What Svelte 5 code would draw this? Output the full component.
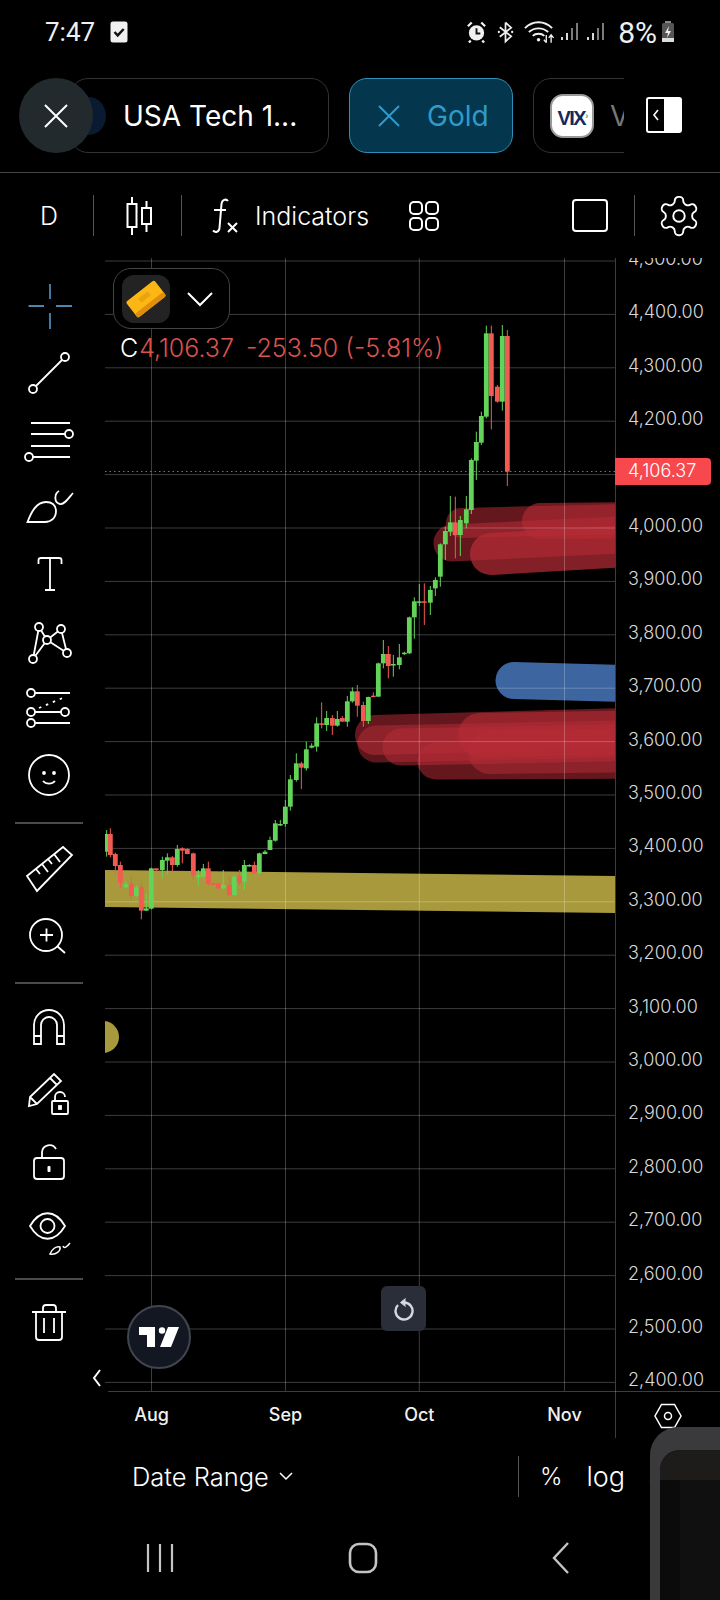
<script>
  const priceY = (p) => 528 + (4000 - p) * 0.534;

  const prices = [];
  for (let p = 4500; p >= 2400; p -= 100) prices.push(p);
  const fmt = (p) => p.toLocaleString('en-US', { minimumFractionDigits: 2 });

  const months = [
    { name: 'Aug', x: 151.5 },
    { name: 'Sep', x: 285.5 },
    { name: 'Oct', x: 419.3 },
    { name: 'Nov', x: 564.5 }
  ];

  // rows are [x, bodyTop, bodyBottom, wickTop, wickBottom, colour], read at 3x
  const sections = [
    { ox: 100, oy: 810, rows: [
      [20,72,125,60,140,'g'],[31,72,135,55,142,'r'],[46,132,168,128,190,'r'],[61,165,218,155,235,'r'],
      [78,222,232,215,235,'g'],[94,222,258,200,272,'r'],[109,232,258,225,262,'g'],[124,232,302,218,328,'r'],
      [139,295,302,250,303,'g'],[154,175,296,173,298,'g'],[169,175,180,175,185,'r'],[187,150,180,140,205,'g'],
      [202,142,152,130,195,'g'],[217,142,165,138,185,'r'],[232,117,165,105,170,'g'],[247,115,122,112,160,'r'],
      [262,117,132,115,133,'r'],[280,130,198,128,210,'r'],[295,195,202,180,225,'g'],[310,175,200,162,205,'g'],
      [325,175,222,155,228,'r'],[340,220,223,218,224,'r'],[355,220,235,220,236,'r'],[370,225,235,180,238,'g'],
      [388,225,255,200,258,'r'],[403,200,255,198,258,'g'],[418,198,218,180,225,'r'],[433,165,215,150,240,'g'],
      [448,165,168,163,170,'g'],[463,165,190,155,192,'r'],[478,130,190,128,192,'g'],[495,125,132,120,133,'g']
    ] },
    { ox: 260, oy: 580, rows: [
      [30,780,810,770,810,'g'],[46,730,782,720,785,'g'],[61,732,736,720,738,'g'],[76,680,732,660,740,'g'],
      [91,598,680,585,692,'g'],[109,550,600,520,605,'g'],[124,550,563,545,627,'r'],[139,508,565,485,572,'g'],
      [155,497,503,490,505,'g'],[170,430,500,412,515,'g'],[185,430,433,367,445,'r'],[200,414,435,393,453,'g'],
      [217,414,437,405,465,'r'],[232,417,437,393,440,'g'],[247,414,425,408,425,'r'],[262,364,425,348,440,'g'],
      [277,334,364,322,368,'g'],[292,334,377,315,410,'r'],[310,375,423,365,440,'r'],[325,351,423,350,432,'g'],
      [340,347,350,337,350,'r'],[355,250,350,248,350,'g'],[370,222,250,180,265,'g'],[385,222,258,198,295,'r'],
      [400,252,256,225,290,'g'],[418,232,255,192,268,'g'],[433,218,222,215,225,'g'],[448,112,220,110,222,'g'],
      [463,64,112,52,176,'g'],[478,64,68,12,78,'g'],[493,64,68,10,135,'r'],[511,30,68,18,105,'g'],[526,0,25,-8,48,'g']
    ] },
    { ox: 400, oy: 310, rows: [
      [121,703,800,700,830,'g'],[136,663,703,650,750,'g'],[151,637,665,558,678,'g'],[166,637,675,560,745,'r'],
      [181,630,675,618,738,'g'],[199,598,640,558,655,'g'],[214,450,600,445,612,'g'],[229,396,452,365,510,'g'],
      [244,318,398,305,405,'g'],[259,70,320,47,325,'g'],[274,70,258,47,358,'r'],[292,230,275,225,278,'r'],
      [307,78,275,45,302,'g'],[322,78,485,60,528,'r']
    ] }
  ];

  const candles = sections.flatMap((s) =>
    s.rows.map(([x, top, bot, wt, wb, c]) => ({
      x: s.ox + x / 3,
      top: s.oy + top / 3,
      h: Math.max((bot - top) / 3, 1.5),
      wt: s.oy + wt / 3,
      wb: s.oy + wb / 3,
      fill: c === 'g' ? '#63d35a' : '#f25a52'
    }))
  );

  // capsule zones: a thick round line running off the right of the plot
  const reds = [
    { x1: 461, y1: 523, y2: 518, w: 30, o: 0.55 },
    { x1: 452, y1: 543, y2: 533, w: 37, o: 0.55 },
    { x1: 491, y1: 554, y2: 544, w: 42, o: 0.72 },
    { x1: 540, y1: 521, y2: 520, w: 36, o: 0.6 },
    { x1: 375, y1: 735, y2: 727, w: 40, o: 0.55 },
    { x1: 376, y1: 744, y2: 738, w: 37, o: 0.5 },
    { x1: 401, y1: 747, y2: 742, w: 37, o: 0.55 },
    { x1: 436, y1: 761, y2: 760, w: 37, o: 0.55 },
    { x1: 480, y1: 735, y2: 732, w: 44, o: 0.6 },
    { x1: 490, y1: 752, y2: 750, w: 44, o: 0.5 }
  ];
</script>

<div class="page">
  <header class="status">
    <span class="time">7:47</span>
    <svg class="check" viewBox="0 0 18 22" width="18" height="22"><rect x="0.5" y="0.5" width="17" height="21" rx="2.5" fill="#f0f0f0"/><path d="M4.5 11l3.2 3.4 6-6.4" fill="none" stroke="#111" stroke-width="2.4"/></svg>
    <span class="grow"></span>
    <svg viewBox="0 0 22 24" width="21" height="24" class="st-ic"><circle cx="11" cy="13" r="8" fill="#f0f0f0"/><path d="M11 8v5.5h4" fill="none" stroke="#111" stroke-width="2"/><path d="M2 6l4-4M20 6l-4-4M5 21l-2 2M17 21l2 2" stroke="#f0f0f0" stroke-width="2.4"/></svg>
    <svg viewBox="0 0 20 24" width="19" height="24" class="st-ic"><path d="M10 2v20l6-5.5L4 7M10 2l6 5.5L4 17" fill="none" stroke="#f0f0f0" stroke-width="1.8"/><circle cx="3" cy="12" r="1.2" fill="#f0f0f0"/><circle cx="17" cy="12" r="1.2" fill="#f0f0f0"/></svg>
    <svg viewBox="0 0 32 24" width="31" height="24" class="st-ic wifi"><path d="M1 8c8-8 20-8 28 0M5 12c6-5 14-5 20 0M9 16c3-3 9-3 12 0" fill="none" stroke="#f0f0f0" stroke-width="2"/><circle cx="15" cy="20" r="1.8" fill="#f0f0f0"/><path d="M23 15v8M20.5 20l2.5 3M28 23v-8M25.5 18l2.5-3 2.5 3" fill="none" stroke="#f0f0f0" stroke-width="1.4"/></svg>
    <svg viewBox="0 0 18 24" width="18" height="24" class="st-ic sig"><path d="M2 20v-3M7 20v-7M12 20V8M17 20V3" stroke="#9a9a9a" stroke-width="1.6"/><path d="M2 20v-3M7 20v-7" stroke="#f0f0f0" stroke-width="1.6"/></svg>
    <svg viewBox="0 0 18 24" width="18" height="24" class="st-ic sig"><path d="M2 20v-3M7 20v-7M12 20V8M17 20V3" stroke="#9a9a9a" stroke-width="1.6"/><path d="M2 20v-3M7 20v-7" stroke="#f0f0f0" stroke-width="1.6"/></svg>
    <span class="pct">8%</span>
    <svg viewBox="0 0 14 24" width="14" height="24" class="batt"><rect x="1" y="3" width="12" height="19" rx="1.5" fill="#555"/><rect x="4" y="1" width="6" height="2" fill="#888"/><rect x="1" y="18" width="12" height="4" fill="#ddd"/><path d="M8 6l-4 7h3l-1 5 4-7H7z" fill="#eee"/></svg>
  </header>

  <nav class="tabbar">
    <div class="tabs">
      <div class="tab first">
        <span class="logo"></span>
        <span class="tab-name">USA Tech 1...</span>
      </div>
      <div class="tab active">
        <svg viewBox="0 0 22 22" width="22" height="22"><path d="M1 1l20 20M21 1L1 21" stroke="#2e9bcb" stroke-width="2"/></svg>
        <span class="tab-name">Gold</span>
      </div>
      <div class="tab last">
        <span class="vix">VIX<i>›</i></span>
        <span class="tab-name dim">V</span>
      </div>
    </div>
    <button class="close" aria-label="close">
      <svg viewBox="0 0 24 24" width="24" height="24"><path d="M1 1l22 22M23 1L1 23" stroke="#fff" stroke-width="2"/></svg>
    </button>
    <svg class="toggle" viewBox="0 0 36 36" width="36" height="36"><rect x="1" y="1" width="34" height="34" rx="2" fill="#000" stroke="#fff" stroke-width="2"/><rect x="18" y="1" width="17" height="34" fill="#fff"/><path d="M12 13l-4 5 4 5" fill="none" stroke="#fff" stroke-width="1.6"/></svg>
  </nav>

  <section class="toolbar">
    <span class="interval">D</span>
    <i class="vsep sep-a"></i>
    <svg class="candle-ic" viewBox="0 0 26 40" width="26" height="40" fill="none" stroke="#fff" stroke-width="2"><path d="M6 1v38M20.5 5v31"/><rect x="1.5" y="8" width="9" height="23" fill="#000"/><rect x="16" y="12" width="9" height="16" fill="#000"/></svg>
    <i class="vsep sep-b"></i>
    <svg class="fx" viewBox="0 0 28 36" width="28" height="36" fill="none" stroke="#fff" stroke-width="2"><path d="M17 3c-2-2.5-6-1.5-6.500 3L8.500 30c-.4 4-4 5-6.500 2.500M3 12h12"/><path d="M17 25l9 9M26 25l-9 9"/></svg>
    <span class="ind">Indicators</span>
    <svg class="tmpl" viewBox="0 0 32 32" width="32" height="32" fill="none" stroke="#fff" stroke-width="2"><rect x="2" y="2" width="12" height="12" rx="4"/><rect x="18" y="2" width="12" height="12" rx="4"/><rect x="2" y="18" width="12" height="12" rx="4"/><rect x="18" y="18" width="12" height="12" rx="4"/></svg>
    <span class="grow"></span>
    <span class="square"></span>
    <i class="vsep sep-c"></i>
    <svg class="gear" viewBox="0 0 24 24" width="46" height="46" fill="none" stroke="#fff" stroke-width="1"><path d="M12.220 2h-.44a2 2 0 0 0-2 2v.18a2 2 0 0 1-1 1.730l-.43.25a2 2 0 0 1-2 0l-.15-.08a2 2 0 0 0-2.730.73l-.22.38a2 2 0 0 0 .73 2.730l.15.1a2 2 0 0 1 1 1.720v.51a2 2 0 0 1-1 1.740l-.15.09a2 2 0 0 0-.73 2.730l.22.38a2 2 0 0 0 2.730.73l.15-.08a2 2 0 0 1 2 0l.43.25a2 2 0 0 1 1 1.730V20a2 2 0 0 0 2 2h.44a2 2 0 0 0 2-2v-.18a2 2 0 0 1 1-1.730l.43-.25a2 2 0 0 1 2 0l.15.08a2 2 0 0 0 2.730-.73l.22-.39a2 2 0 0 0-.73-2.730l-.15-.08a2 2 0 0 1-1-1.740v-.5a2 2 0 0 1 1-1.740l.15-.09a2 2 0 0 0 .73-2.730l-.22-.38a2 2 0 0 0-2.730-.73l-.15.08a2 2 0 0 1-2 0l-.43-.25a2 2 0 0 1-1-1.730V4a2 2 0 0 0-2-2z"/><circle cx="12" cy="12" r="3"/></svg>
  </section>

  <main class="main">
    <aside class="tools">
      <div class="tool"><svg viewBox="0 0 48 48"><path d="M2.500 24H18M30 24h16M24 2v15M24 31v16"/></svg></div>
      <div class="tool"><svg viewBox="0 0 48 48"><path d="M10 37l26-26"/><circle cx="7" cy="40" r="4"/><circle cx="39" cy="8" r="4"/></svg></div>
      <div class="tool"><svg viewBox="0 0 48 48"><path d="M5 7h39M5 18h34M5 30h39M7 41h37"/><circle cx="43" cy="18" r="4"/><circle cx="3" cy="41" r="4"/></svg></div>
      <div class="tool"><svg viewBox="0 0 48 48"><path d="M1.500 39C5 30 10 19 20 19c6 0 10 3 10 9 0 7-5 11-11 11zM33 8c-5 3-5 12 1 13 4 1 8-5 13-11"/></svg></div>
      <div class="tool"><svg viewBox="0 0 48 48"><path d="M12.500 14v-4q0-2 2.500-2h18q2.500 0 2.500 2v4M24 8v32M19 40h10"/></svg></div>
      <div class="tool"><svg viewBox="0 0 48 48"><path d="M13 10l8 13M13 10L7 42M35 12L21 23M21 23L7 42M21 23l20 13M35 12l6 24"/><g fill="#000"><circle cx="13" cy="10" r="4"/><circle cx="35" cy="12" r="4"/><circle cx="21" cy="23" r="4"/><circle cx="7" cy="42" r="4"/><circle cx="41" cy="36" r="4"/></g></svg></div>
      <div class="tool"><svg viewBox="0 0 48 48"><path d="M9 9h35M9 28h26M9 39h35"/><path d="M13 24l26-11" stroke-dasharray="2.500 5"/><circle cx="5" cy="9" r="4"/><circle cx="5" cy="28" r="4"/><circle cx="39" cy="28" r="4"/><circle cx="5" cy="39" r="4"/></svg></div>
      <div class="tool"><svg viewBox="0 0 48 48"><circle cx="23" cy="24" r="20"/><path d="M17 30c3 3.500 9 3.500 12 0"/><circle cx="18" cy="22" r="1" fill="#fff"/><circle cx="28" cy="22" r="1" fill="#fff"/></svg></div>
      <hr />
      <div class="tool short"><svg viewBox="0 0 48 48"><path d="M1 31L37 2l9 8-35 36zM10 24l4 5M16 19l6 8M22 14l4 5M28 9l6 8"/></svg></div>
      <div class="tool short"><svg viewBox="0 0 48 48"><circle cx="20" cy="24" r="16"/><path d="M31 35l8 7M14 24h13M20.500 17.500v13"/></svg></div>
      <hr class="tight" />
      <div class="tool"><svg viewBox="0 0 48 48"><path d="M8 41V22a15 15 0 0 1 30 0v19h-7V22a8 8 0 0 0-16 0v19zM8 33h7M31 33h7"/></svg></div>
      <div class="tool"><svg viewBox="0 0 48 48"><path d="M3 36l1-9L28 4l7 7-24 23zM4 27l7 7M24 8l7 7"/><rect x="26" y="31" width="16" height="13" rx="1"/><path d="M29 31v-4a5 5 0 0 1 10 0"/><rect x="33" y="36" width="2" height="3" fill="#fff"/></svg></div>
      <div class="tool tall"><svg viewBox="0 0 48 48"><rect x="8" y="20" width="30" height="21" rx="3"/><path d="M16 20v-6a7.500 7.500 0 0 1 14-3"/><rect x="21.500" y="28" width="3" height="6" rx="1" fill="#fff" stroke="none"/></svg></div>
      <div class="tool"><svg viewBox="0 0 48 48"><path d="M4 19C14 2 29 2 39 19 29 36 14 36 4 19z"/><circle cx="21.500" cy="19" r="7"/><path d="M24 47c2-5 6-8 10-7 1 4-4 8-10 7zM37 39c1 3 4 1 7-3" stroke-width="1.500"/></svg></div>
      <hr class="tight" />
      <div class="tool"><svg viewBox="0 0 48 48"><path d="M6 13h34M17 13V9q0-3 3-3h7q3 0 3 3v4M10 13v25q0 3 3 3h20q3 0 3-3V13M18 19v15M28 19v15"/></svg></div>
      <svg class="collapse" viewBox="0 0 10 18" width="10" height="18"><path d="M8 1L2 9l6 8" fill="none" stroke="#fff" stroke-width="2"/></svg>
    </aside>

    <div class="chart">
      <svg class="plot" viewBox="105 258 615 1180" width="615" height="1180">
        <defs>
          <clipPath id="plot-area"><rect x="105" y="258" width="510" height="1133"/></clipPath>
        </defs>
        <g clip-path="url(#plot-area)">
          <path d="M105 870L615 876V913L105 907z" fill="#a89a3c"/>
          <circle cx="103" cy="1037" r="16" fill="#a89a3c"/>
          <line x1="514" y1="680.500" x2="640" y2="684" stroke="#3d659f" stroke-width="37" stroke-linecap="round"/>
          {#each reds as z}
            <line x1={z.x1} y1={z.y1} x2="660" y2={z.y2} stroke="#b62c36" stroke-opacity={z.o} stroke-width={z.w} stroke-linecap="round"/>
          {/each}
        </g>
        <g stroke="#fff" stroke-opacity="0.24">
          {#each prices as p}
            <line x1="105" x2="615" y1={priceY(p)} y2={priceY(p)}/>
          {/each}
          {#each months as m}
            <line x1={m.x} x2={m.x} y1="258" y2="1391"/>
          {/each}
          <line x1="108" x2="720" y1="1391.500" y2="1391.500"/>
          <line x1="615.500" x2="615.500" y1="258" y2="1438"/>
        </g>
        <line x1="105" x2="615" y1="471.500" y2="471.500" stroke="#f7685e" stroke-dasharray="1.500 3" stroke-opacity="0.8"/>
        <g clip-path="url(#plot-area)">
          {#each candles as c}
            <line x1={c.x} x2={c.x} y1={c.wt} y2={c.wb} stroke={c.fill}/>
            <rect x={c.x - 2.4} y={c.top} width="4.800" height={c.h} fill={c.fill}/>
          {/each}
        </g>
      </svg>

      {#each prices as p}
        <span class="price" style="top:{priceY(p) - 258 - 2}px">{fmt(p)}</span>
      {/each}
      <span class="tag">4,106.37</span>
      {#each months as m}
        <span class="month" style="left:{m.x - 105}px">{m.name}</span>
      {/each}
      <svg class="hex" viewBox="0 0 30 30" width="30" height="30" fill="none" stroke="#fff" stroke-width="1.500"><path d="M8.500 3.500h13L28 15l-6.500 11.500h-13L2 15z"/><circle cx="15" cy="15" r="3.500"/></svg>

      <div class="symbol">
        <span class="tile">
          <svg viewBox="0 0 48 48" width="48" height="48"><g transform="rotate(-38 24 24)"><rect x="6" y="14" width="36" height="20" rx="2" fill="#fdb714"/><rect x="6" y="29" width="36" height="5" rx="2" fill="#e08e0b"/><rect x="18" y="19" width="12" height="5" fill="#eaa40e"/></g></svg>
        </span>
        <svg viewBox="0 0 26 16" width="26" height="16"><path d="M1 2l12 12L25 2" fill="none" stroke="#fff" stroke-width="2"/></svg>
      </div>
      <div class="ohlc"><b>C</b><span>4,106.37</span><span class="chg">-253.50 (-5.81%)</span></div>

      <button class="logo-btn" aria-label="TradingView">
        <svg viewBox="0 0 40 20" width="40" height="20" fill="#fff"><path d="M0 0h16v20H8V8H0z"/><circle cx="23" cy="3.500" r="3.200"/><path d="M29 0h11l-8 20H21z"/></svg>
      </button>
      <button class="reset" aria-label="reset">
        <svg viewBox="0 0 24 24" width="24" height="24" fill="none" stroke="#d5d8e0" stroke-width="2.400"><path d="M6 8a8.500 8.500 0 1 0 6-2.500"/><path d="M13.500 1.500L8.500 5.500l5 4" fill="#d5d8e0" stroke-width="1"/></svg>
      </button>
    </div>
  </main>

  <section class="bottom">
    <span class="range">Date Range</span>
    <svg viewBox="0 0 14 9" width="14" height="9"><path d="M1 1l6 6 6-6" fill="none" stroke="#fff" stroke-width="1.500"/></svg>
    <i class="vsep bsep"></i>
    <span class="opt pct-opt">%</span>
    <span class="opt">log</span>
    <span class="opt">auto</span>
  </section>

  <footer class="navbar">
    <svg viewBox="0 0 28 30" width="28" height="30" fill="none" stroke="#c4c4c4" stroke-width="2.200"><path d="M2 1v28M14 1v28M26 1v28"/></svg>
    <svg viewBox="0 0 30 32" width="30" height="32" fill="none" stroke="#c4c4c4" stroke-width="2.600"><rect x="2" y="2" width="26" height="28" rx="9"/></svg>
    <svg viewBox="0 0 18 32" width="18" height="32" fill="none" stroke="#c4c4c4" stroke-width="2.400"><path d="M16 1L2 16l14 15"/></svg>
  </footer>

  <div class="pip"><div class="pip-inner"><div class="pip-top"></div><div class="pip-body"></div></div></div>
</div>

<style>
  :global(body) {
    margin: 0;
    background: #000;
  }

  .page {
    position: relative;
    width: 720px;
    height: 1600px;
    overflow: hidden;
    background: #000;
    color: #fff;
    font-family: Inter, "Noto Sans", sans-serif;
    font-weight: 300;
  }

  .grow {
    flex: 1;
  }

  /* status bar */
  .status {
    height: 70px;
    padding: 0 45px 6px;
    box-sizing: border-box;
    display: flex;
    align-items: center;
    color: #f0f0f0;
  }

  .time {
    font-family: Roboto, sans-serif;
    font-size: 26px;
    font-weight: 400;
    margin-right: 15px;
  }

  .st-ic {
    margin-right: 9px;
  }

  .st-ic.wifi {
    margin-right: 5px;
  }

  .st-ic.sig {
    margin-right: 8px;
  }

  .pct {
    font-family: Roboto, sans-serif;
    font-size: 30px;
    font-weight: 400;
    margin-left: 6px;
  }

  .batt {
    margin-left: 4px;
  }

  /* tabs */
  .tabbar {
    position: relative;
    height: 103px;
    padding-top: 8px;
    box-sizing: border-box;
    border-bottom: 1px solid #444;
  }

  .tabs {
    margin-left: 70px;
    width: 554px;
    overflow: hidden;
    display: flex;
    gap: 20px;
  }

  .tab {
    flex: none;
    height: 75px;
    box-sizing: border-box;
    border: 1px solid #333;
    border-radius: 18px;
    display: flex;
    align-items: center;
  }

  .tab-name {
    font-size: 28px;
    font-weight: 400;
    white-space: nowrap;
  }

  .first {
    width: 259px;
    padding-left: 1px;
    gap: 17px;
  }

  .logo {
    width: 34px;
    height: 38px;
    border-radius: 50%;
    background: #0a1a30;
  }

  .active {
    width: 164px;
    padding-left: 28px;
    gap: 27px;
    background: #04364d;
    border-color: #2f8fb8;
  }

  .active .tab-name {
    color: #2e9bcb;
  }

  .last {
    width: 200px;
    padding-left: 16px;
    gap: 16px;
  }

  .vix {
    width: 44px;
    height: 44px;
    box-sizing: border-box;
    border: 2px solid #999;
    border-radius: 13px;
    background: #fff;
    color: #14295e;
    font: 800 20px/40px "Liberation Sans", sans-serif;
    letter-spacing: -1.5px;
    text-align: center;
    white-space: nowrap;
  }

  .vix i {
    color: #2fae5d;
    font-size: 9px;
    font-style: normal;
    vertical-align: 6px;
  }

  .dim {
    color: #777;
  }

  .close {
    position: absolute;
    left: 19px;
    top: 8px;
    width: 74px;
    height: 75px;
    padding: 0;
    border: 0;
    border-radius: 50%;
    background: #222a2e;
    display: flex;
    align-items: center;
    justify-content: center;
  }

  .toggle {
    position: absolute;
    left: 646px;
    top: 27px;
  }

  /* toolbar */
  .toolbar {
    height: 85px;
    display: flex;
    align-items: center;
    padding-right: 18px;
    box-sizing: border-box;
  }

  .interval {
    width: 93px;
    text-align: center;
    padding-left: 5px;
    box-sizing: border-box;
    font-size: 25px;
  }

  .vsep {
    width: 1px;
    height: 41px;
    background: #555;
    flex: none;
  }

  .candle-ic {
    margin: 0 17px 0 32px;
  }

  .sep-b {
    margin-left: 12px;
  }

  .fx {
    margin-left: 29px;
  }

  .ind {
    margin-left: 16px;
    font-size: 25px;
  }

  .tmpl {
    margin-left: 39px;
  }

  .square {
    width: 32px;
    height: 29px;
    border: 2px solid #fff;
    border-radius: 4px;
  }

  .sep-c {
    margin: 0 21px 0 26px;
  }

  /* main */
  .main {
    display: flex;
    height: 1180px;
  }

  .tools {
    position: relative;
    width: 105px;
    flex: none;
    padding-top: 14px;
    box-sizing: border-box;
  }

  .tools hr {
    width: 68px;
    height: 2px;
    margin: 14px 0 12px 15px;
    border: 0;
    background: #4a4a4f;
  }

  .tools hr.tight {
    margin-bottom: 9px;
  }

  .tool {
    width: 100px;
    height: 67px;
    display: flex;
    align-items: center;
    justify-content: center;
  }

  .tool.short {
    height: 66px;
  }

  .tool.tall {
    height: 70px;
  }

  .tool svg {
    width: 48px;
    height: 48px;
    overflow: visible;
    fill: none;
    stroke: #fff;
    stroke-width: 1.8;
  }

  .tool:first-child svg {
    stroke: #4a86b0;
  }

  .collapse {
    position: absolute;
    left: 92px;
    top: 1111px;
  }

  .chart {
    position: relative;
    width: 615px;
    height: 1180px;
    overflow: hidden;
  }

  .plot {
    display: block;
  }

  .price {
    position: absolute;
    left: 523px;
    font-size: 18px;
    line-height: 22px;
    transform: translateY(-11px);
    color: #d8d8d8;
    white-space: nowrap;
  }

  .tag {
    position: absolute;
    left: 510px;
    top: 200px;
    width: 96px;
    height: 27px;
    padding-left: 13px;
    box-sizing: border-box;
    background: #f7484e;
    border-radius: 0 4px 4px 0;
    color: #fff;
    font-size: 18px;
    line-height: 26px;
    white-space: nowrap;
  }

  .month {
    position: absolute;
    top: 1146px;
    transform: translateX(-50%);
    font-size: 18px;
    font-weight: 500;
    line-height: 22px;
    color: #f0f0f0;
  }

  .hex {
    position: absolute;
    left: 548px;
    top: 1143px;
  }

  .symbol {
    position: absolute;
    left: 8px;
    top: 10px;
    width: 117px;
    height: 61px;
    box-sizing: border-box;
    padding-left: 8px;
    background: #000;
    border: 1px solid #444;
    border-radius: 18px;
    display: flex;
    align-items: center;
    gap: 17px;
  }

  .tile {
    width: 48px;
    height: 48px;
    border-radius: 12px;
    background: #232323;
  }

  .ohlc {
    position: absolute;
    left: 15px;
    top: 75px;
    display: flex;
    font-size: 25px;
    line-height: 30px;
    color: #d9534f;
    white-space: nowrap;
  }

  .ohlc b {
    color: #fff;
    font-weight: 300;
    margin-right: 1px;
  }

  .chg {
    margin-left: 12px;
  }

  .logo-btn {
    position: absolute;
    left: 22px;
    top: 1047px;
    width: 64px;
    height: 64px;
    padding: 0;
    border: 2px solid #41454f;
    border-radius: 50%;
    background: #131722;
    display: flex;
    align-items: center;
    justify-content: center;
  }

  .reset {
    position: absolute;
    left: 276px;
    top: 1028px;
    width: 45px;
    height: 45px;
    padding: 0;
    border: 0;
    border-radius: 6px;
    background: #2a2e39;
    display: flex;
    align-items: center;
    justify-content: center;
  }

  /* bottom */
  .bottom {
    height: 77px;
    display: flex;
    align-items: center;
    padding-left: 132px;
  }

  .bottom > * {
    flex: none;
  }

  .range {
    font-size: 25.500px;
    margin-right: 10px;
    white-space: nowrap;
  }

  .bsep {
    background: #555;
    margin: 0 21px 0 225px;
  }

  .opt {
    font-size: 27px;
    margin-right: 24px;
  }

  .pct-opt {
    font-size: 24px;
  }

  /* system nav */
  .navbar {
    height: 85px;
    position: relative;
    display: flex;
    align-items: center;
    padding: 0 0 0 146px;
    gap: 174px;
    box-sizing: border-box;
  }

  .pip {
    position: absolute;
    left: 650px;
    top: 1427px;
    width: 80px;
    height: 173px;
    background: #3a3a3c;
    border-radius: 28px 0 0 0;
    padding: 23px 0 0 10px;
    box-sizing: border-box;
  }

  .pip-inner {
    height: 100%;
    border-radius: 20px 0 0 0;
    overflow: hidden;
    background: #0b0b0c;
  }

  .pip-top {
    height: 30px;
    background: #1d1c1a;
  }

  .pip-body {
    margin-left: 20px;
    height: 120px;
    background: #101011;
  }
</style>
